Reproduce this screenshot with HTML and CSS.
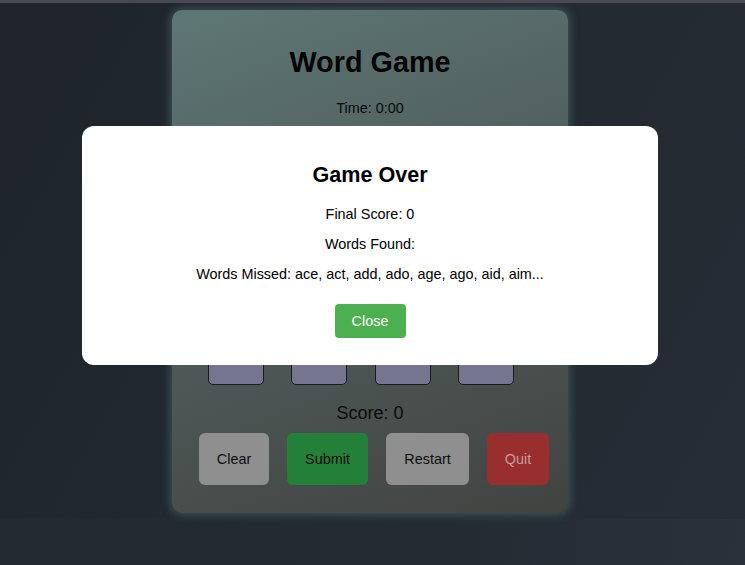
FILE: index.html
```html
<!DOCTYPE html>
<html lang="en">
<head>
<meta charset="utf-8">
<title>Word Game</title>
<link rel="stylesheet" href="styles.css">
</head>
<body>
<div class="topbar"></div>
<main class="stage">
  <section class="game">
    <h1 class="title">Word Game</h1>
    <div class="timer">Time: 0:00</div>
    <div class="current-word"></div>
    <div class="tiles">
      <div class="tile"></div><div class="tile"></div><div class="tile"></div><div class="tile"></div>
      <div class="tile"></div><div class="tile"></div><div class="tile"></div><div class="tile"></div>
    </div>
    <div class="score">Score: 0</div>
    <div class="controls">
      <button class="btn btn-clear">Clear</button>
      <button class="btn btn-submit">Submit</button>
      <button class="btn btn-restart">Restart</button>
      <button class="btn btn-quit">Quit</button>
    </div>
  </section>
</main>
<div class="below"></div>

<div class="modal">
  <h2 class="modal-title">Game Over</h2>
  <p class="modal-line first">Final Score: 0</p>
  <p class="modal-line">Words Found:</p>
  <p class="modal-line last">Words Missed: ace, act, add, ado, age, ago, aid, aim...</p>
  <button class="close-btn">Close</button>
</div>
</body>
</html>
```
FILE: styles.css
```css
* { box-sizing: border-box; }
html, body { margin: 0; padding: 0; }
body {
  font-family: "Liberation Sans", Arial, sans-serif;
  background: #252c34;
  height: 565px;
  overflow: hidden;
  position: relative;
}
.topbar {
  height: 3px;
  background: #4a4a53;
}
.stage {
  height: 516px;
  background: linear-gradient(120deg, #1e242a 0%, #222930 50%, #262d36 100%);
  display: flex;
  justify-content: center;
  padding-top: 7px;
}
.below {
  height: 46px;
  background: linear-gradient(100deg, #222930 0%, #242b33 60%, #2a313a 100%);
}
.game {
  width: 396px;
  height: 503px;
  margin-left: -5px;
  border-radius: 10px;
  background: linear-gradient(160deg, #5e7775 0%, #505e5c 45%, #424341 100%);
  box-shadow: 0 0 9px 2px rgba(95, 135, 140, 0.45);
  padding-top: 36px;
  display: flex;
  flex-direction: column;
}
.title {
  margin: 0;
  font-size: 28.8px;
  line-height: 33px;
  font-weight: bold;
  text-align: center;
  color: #050505;
}
.timer {
  margin-top: 21px;
  font-size: 14.4px;
  line-height: 16px;
  text-align: center;
  color: #0a0a0a;
}
.current-word {
  height: 40px;
  margin-top: 21px;
}
.tiles {
  margin-top: 84px;
  margin-left: 36px;
  display: grid;
  grid-template-columns: repeat(4, 56px);
  column-gap: 27.4px;
  row-gap: 12px;
}
.tile {
  height: 56px;
  background: #75758f;
  border: 1px solid #1b1b1f;
  border-radius: 5px;
}
.score {
  margin-top: 18px;
  font-size: 18px;
  line-height: 21px;
  text-align: center;
  color: #0c0c0c;
}
.controls {
  margin-top: 9px;
  padding-left: 27px;
  display: flex;
  gap: 18px;
}
.btn {
  font-family: "Liberation Sans", Arial, sans-serif;
  font-size: 14.4px;
  line-height: 16px;
  height: 52px;
  padding: 0;
  border: none;
  border-radius: 6px;
  color: #0e0e0e;
}
.btn-clear { background: #8f8f8f; width: 70px; }
.btn-submit { background: #238038; width: 81px; }
.btn-restart { background: #8f8f8f; width: 83px; }
.btn-quit { background: #992e2f; color: #c89c9c; width: 62px; }

.modal {
  position: absolute;
  left: 82px;
  top: 126px;
  width: 576px;
  height: 239px;
  background: #ffffff;
  border-radius: 12px;
  padding-top: 36px;
  display: flex;
  flex-direction: column;
  align-items: center;
  color: #000;
}
.modal-title {
  margin: 0;
  font-size: 21.6px;
  line-height: 26px;
  font-weight: bold;
}
.modal-line {
  margin: 13px 0 0;
  font-size: 14.4px;
  line-height: 16.5px;
}
.modal-line.first { margin-top: 18px; }
.modal-line.last { margin-top: 14px; }
.close-btn {
  margin-top: 21.5px;
  width: 71px;
  height: 34px;
  padding: 0;
  border: none;
  border-radius: 4px;
  background: #4caf50;
  color: #ffffff;
  font-family: "Liberation Sans", Arial, sans-serif;
  font-size: 14.4px;
}
```
